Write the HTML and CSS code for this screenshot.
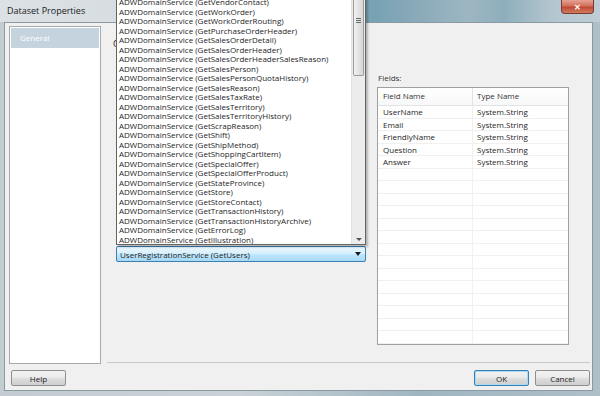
FILE: index.html
```html
<!DOCTYPE html>
<html>
<head>
<meta charset="utf-8">
<link rel="stylesheet" href="styles.css">
</head>
<body>
<div class="window">
  <div class="titlebar">
    <span class="title">Dataset Properties</span>
    <span class="close">&#x2715;</span>
  </div>
  <div class="client">
    <div class="main">
      <div class="nav">
        <div class="nav-item selected">General</div>
      </div>
      <div class="content">
        <div class="body">
          <div class="left-col">
            <div class="choose-label">Choose</div>
            <div class="combo-wrap">
              <div class="combo">
                <span>UserRegistrationService (GetUsers)</span>
                <span class="arrow"></span>
              </div>
              <div class="popup">
                <div class="items">
                  <div>ADWDomainService (GetVendorContact)</div>
                  <div>ADWDomainService (GetWorkOrder)</div>
                  <div>ADWDomainService (GetWorkOrderRouting)</div>
                  <div>ADWDomainService (GetPurchaseOrderHeader)</div>
                  <div>ADWDomainService (GetSalesOrderDetail)</div>
                  <div>ADWDomainService (GetSalesOrderHeader)</div>
                  <div>ADWDomainService (GetSalesOrderHeaderSalesReason)</div>
                  <div>ADWDomainService (GetSalesPerson)</div>
                  <div>ADWDomainService (GetSalesPersonQuotaHistory)</div>
                  <div>ADWDomainService (GetSalesReason)</div>
                  <div>ADWDomainService (GetSalesTaxRate)</div>
                  <div>ADWDomainService (GetSalesTerritory)</div>
                  <div>ADWDomainService (GetSalesTerritoryHistory)</div>
                  <div>ADWDomainService (GetScrapReason)</div>
                  <div>ADWDomainService (GetShift)</div>
                  <div>ADWDomainService (GetShipMethod)</div>
                  <div>ADWDomainService (GetShoppingCartItem)</div>
                  <div>ADWDomainService (GetSpecialOffer)</div>
                  <div>ADWDomainService (GetSpecialOfferProduct)</div>
                  <div>ADWDomainService (GetStateProvince)</div>
                  <div>ADWDomainService (GetStore)</div>
                  <div>ADWDomainService (GetStoreContact)</div>
                  <div>ADWDomainService (GetTransactionHistory)</div>
                  <div>ADWDomainService (GetTransactionHistoryArchive)</div>
                  <div>ADWDomainService (GetErrorLog)</div>
                  <div>ADWDomainService (GetIllustration)</div>
                </div>
                <div class="scrollbar">
                  <div class="thumb"><span class="grip"></span></div>
                  <div class="track"></div>
                  <div class="down"></div>
                </div>
              </div>
            </div>
          </div>
          <div class="right-col">
            <div class="fields-label">Fields:</div>
            <div class="grid">
              <div class="row head"><div class="c1">Field Name</div><div class="c2">Type Name</div></div>
              <div class="row"><div class="c1">UserName</div><div class="c2">System.String</div></div>
              <div class="row"><div class="c1">Email</div><div class="c2">System.String</div></div>
              <div class="row"><div class="c1">FriendlyName</div><div class="c2">System.String</div></div>
              <div class="row"><div class="c1">Question</div><div class="c2">System.String</div></div>
              <div class="row"><div class="c1">Answer</div><div class="c2">System.String</div></div>
              <div class="row"><div class="c1"></div><div class="c2"></div></div>
              <div class="row"><div class="c1"></div><div class="c2"></div></div>
              <div class="row"><div class="c1"></div><div class="c2"></div></div>
              <div class="row"><div class="c1"></div><div class="c2"></div></div>
              <div class="row"><div class="c1"></div><div class="c2"></div></div>
              <div class="row"><div class="c1"></div><div class="c2"></div></div>
              <div class="row"><div class="c1"></div><div class="c2"></div></div>
              <div class="row"><div class="c1"></div><div class="c2"></div></div>
              <div class="row"><div class="c1"></div><div class="c2"></div></div>
              <div class="row"><div class="c1"></div><div class="c2"></div></div>
              <div class="row"><div class="c1"></div><div class="c2"></div></div>
              <div class="row"><div class="c1"></div><div class="c2"></div></div>
              <div class="row"><div class="c1"></div><div class="c2"></div></div>
              <div class="row"><div class="c1"></div><div class="c2"></div></div>
            </div>
          </div>
        </div>
        <div class="separator"></div>
      </div>
    </div>
    <div class="buttons">
      <button class="btn help">Help</button>
      <div class="spacer"></div>
      <button class="btn ok">OK</button>
      <button class="btn cancel">Cancel</button>
    </div>
  </div>
</div>
</body>
</html>
```

FILE: styles.css
```css
html, body {
  margin: 0;
  padding: 0;
}
body {
  width: 600px;
  height: 396px;
  overflow: hidden;
  font-family: "Open Sans", "Noto Sans", sans-serif;
  font-size: 8px;
  color: #1e1e1e;
}
.window {
  width: 600px;
  height: 396px;
  box-sizing: border-box;
  background: linear-gradient(90deg, #c3ccd1 0%, #c9d2d6 40%, #9fb6c1 70%, #aebfc8 100%);
  display: flex;
  flex-direction: column;
  padding: 0 7px 6px 4px;
}
.titlebar {
  height: 22px;
  margin: 0 -7px 0 -4px;
  padding: 0 6px 0 7px;
  display: flex;
  align-items: flex-start;
  background: linear-gradient(90deg, #dbe1e4 0%, #d3dbdf 40%, #a9c2cc 55%, #76a2b4 62%, #86a8b8 68%, #9db6c2 78%, #8eaebd 84%, #b3c6cf 92%, #bfcdd4 100%);
}
.title {
  font-size: 9px;
  line-height: 22px;
  color: #1a1a1a;
}
.close {
  margin-left: auto;
  width: 33px;
  height: 14px;
  box-sizing: border-box;
  border: 1px solid #7a3a36;
  border-top: none;
  border-radius: 0 0 4px 4px;
  background: linear-gradient(180deg, #e5a393 0%, #d2705c 45%, #c04a35 55%, #d07a5e 100%);
  color: #fff;
  font-size: 8px;
  font-weight: bold;
  line-height: 13px;
  text-align: center;
}
.client {
  flex: 1;
  background: #f0f0f0;
  border: 1px solid #8b9aa2;
  display: flex;
  flex-direction: column;
}
.main {
  flex: 1;
  display: flex;
  padding: 3px 2px 0 4px;
  gap: 6px;
}
.nav {
  width: 90px;
  height: 335px;
  background: #fff;
  border: 1px solid #a9a9a9;
  padding-top: 1px;
}
.nav-item {
  height: 20px;
  line-height: 20px;
  padding-left: 9px;
  margin: 0 1px;
}
.nav-item.selected {
  background: #c5d3de;
  color: #fff;
}
.content {
  flex: 1;
  display: flex;
  flex-direction: column;
}
.body {
  flex: 1;
  display: flex;
  gap: 11px;
}
.left-col {
  width: 250px;
  padding-left: 9px;
  display: flex;
  flex-direction: column;
}
.choose-label {
  margin-left: -3px;
  margin-top: 13px;
  line-height: 10px;
  font-size: 9px;
}
.combo-wrap {
  position: relative;
  margin-top: 197px;
}
.combo {
  height: 16px;
  box-sizing: border-box;
  border: 1px solid #3c7fb1;
  border-radius: 2px;
  background: linear-gradient(180deg, #eaf6fd 0%, #d9f0fc 45%, #bee6fd 55%, #a7d9f5 100%);
  display: flex;
  align-items: center;
  padding: 0 4px 0 3px;
  color: #1e1e1e;
}
.combo .arrow {
  margin-left: auto;
  width: 0;
  height: 0;
  border-left: 3px solid transparent;
  border-right: 3px solid transparent;
  border-top: 4px solid #1a1a1a;
}
.popup {
  position: absolute;
  left: 0;
  bottom: 17px;
  width: 250px;
  height: 249px;
  box-sizing: border-box;
  background: #fff;
  border: 1px solid #646464;
  border-top: none;
  display: flex;
  box-shadow: 2px 2px 2px rgba(0, 0, 0, 0.25);
}
.items {
  flex: 1;
  overflow: hidden;
  padding-left: 2px;
  line-height: 9.48px;
  white-space: nowrap;
  color: #1e1e1e;
  display: flex;
  flex-direction: column;
  justify-content: flex-end;
}
.scrollbar {
  width: 13px;
  background: #ececec;
  border-left: 1px solid #e2e2e2;
  display: flex;
  flex-direction: column;
}
.thumb {
  height: 80px;
  box-sizing: border-box;
  margin: 0 1px;
  border: 1px solid #9a9a9a;
  border-top: none;
  border-radius: 0 0 2px 2px;
  background: linear-gradient(90deg, #f2f2f2 0%, #e2e2e2 50%, #d6d6d6 100%);
  display: flex;
  justify-content: center;
  padding-top: 22px;
}
.grip {
  width: 5px;
  height: 6px;
  background: repeating-linear-gradient(180deg, #6a6a6a 0 1px, transparent 1px 2px);
}
.track {
  flex: 1;
}
.down {
  height: 9px;
  display: flex;
  justify-content: center;
  align-items: center;
}
.down::after {
  content: "";
  width: 0;
  height: 0;
  border-left: 3px solid transparent;
  border-right: 3px solid transparent;
  border-top: 3px solid #555;
}
.right-col {
  width: 192px;
  display: flex;
  flex-direction: column;
}
.fields-label {
  margin-top: 47px;
  line-height: 10px;
  margin-left: 1px;
  color: #333;
}
.grid {
  margin-top: 4px;
  height: 258px;
  box-sizing: border-box;
  border: 1px solid #a0a0a0;
  background: #fff;
  overflow: hidden;
}
.row {
  display: flex;
  flex-shrink: 0;
  height: 12.5px;
  box-sizing: border-box;
  border-bottom: 1px solid #f0f0f0;
  line-height: 12px;
}
.row.head {
  height: 18px;
  line-height: 16px;
  border-bottom: 1px solid #e3e3e3;
  background: linear-gradient(180deg, #ffffff 0%, #f7f8f9 100%);
  color: #333;
}
.c1 {
  width: 95px;
  padding-left: 5px;
  box-sizing: border-box;
  border-right: 1px solid #f0f0f0;
}
.row.head .c1 {
  border-right-color: #e3e3e3;
}
.c2 {
  flex: 1;
  padding-left: 4px;
}
.separator {
  height: 1px;
  background: #c9c9c9;
  margin-bottom: 1px;
}
.buttons {
  display: flex;
  padding: 6px 2px 4px 6px;
  gap: 6px;
  align-items: flex-start;
}
.spacer {
  flex: 1;
}
.btn {
  width: 55px;
  height: 16px;
  box-sizing: border-box;
  font-family: "Open Sans", "Noto Sans", sans-serif;
  font-size: 8px;
  color: #1e1e1e;
  border: 1px solid #8e8f8f;
  border-radius: 2px;
  background: linear-gradient(180deg, #f2f2f2 0%, #ebebeb 45%, #dddddd 55%, #cfcfcf 100%);
  padding: 0;
  line-height: 13px;
}
.btn.ok {
  border-color: #3c7fb1;
  box-shadow: inset 0 0 0 1px #a8dcf5;
}
```
